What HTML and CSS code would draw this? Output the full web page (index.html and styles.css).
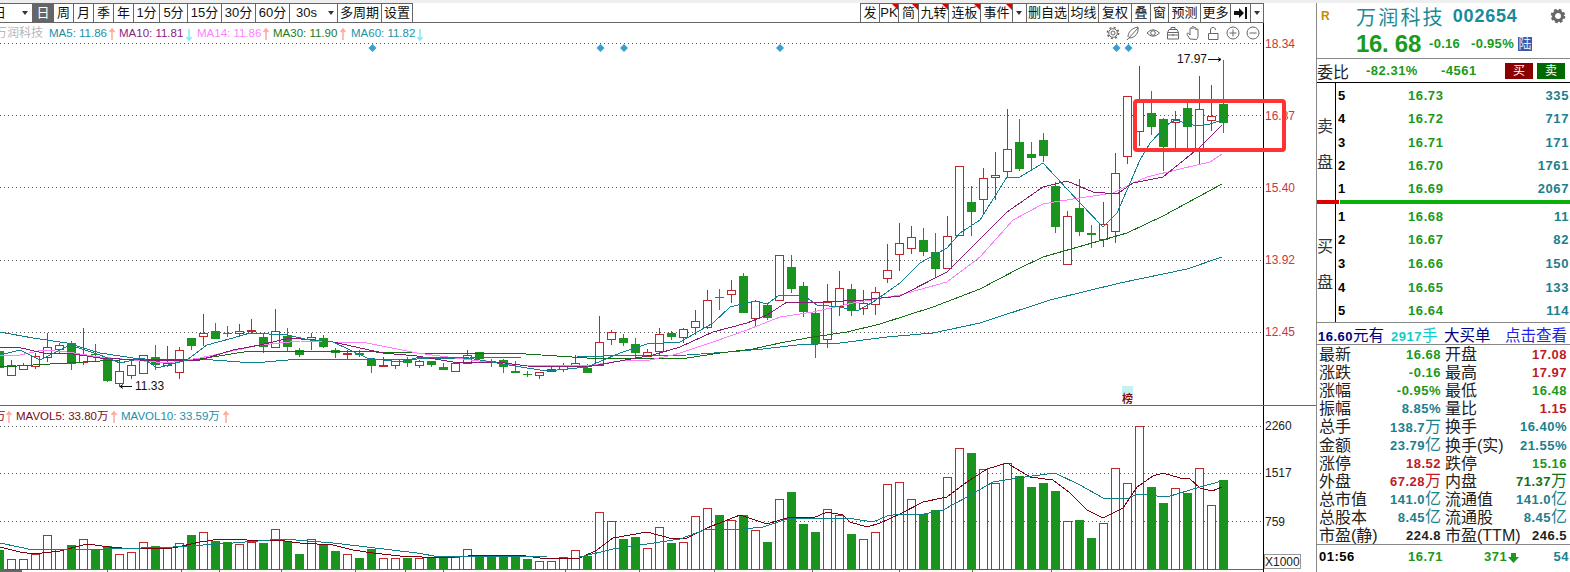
FILE: index.html
```html
<!DOCTYPE html>
<html lang="zh">
<head>
<meta charset="utf-8">
<title>万润科技 002654</title>
<link rel="stylesheet" href="styles.css">
</head>
<body>
<div class="strip"></div>
<div class="app">
  <main class="main">
    <nav class="toolbar">
      <div class="tgroup">
        <div class="cell first"><span class="firsttext">日</span><i class="caret"></i></div>
        <div class="cell c21 on">日</div>
        <div class="cell c20">周</div>
        <div class="cell c20">月</div>
        <div class="cell c20">季</div>
        <div class="cell c20">年</div>
        <div class="cell c26">1分</div>
        <div class="cell c28">5分</div>
        <div class="cell c34">15分</div>
        <div class="cell c34">30分</div>
        <div class="cell c34">60分</div>
        <div class="cell c48 sel"><span class="seltext">30s</span><i class="caret"></i></div>
        <div class="cell c44">多周期</div>
        <div class="cell c32 endb">设置</div>
      </div>
      <div class="tgroup">
        <div class="cell c19">发</div>
        <div class="cell c19 flag">PK</div>
        <div class="cell c20 flag">简</div>
        <div class="cell c30 flag">九转</div>
        <div class="cell c32 flag">连板</div>
        <div class="cell c32 flag">事件</div>
        <div class="cell c14"><i class="caret"></i></div>
        <div class="cell c42">删自选</div>
        <div class="cell c30">均线</div>
        <div class="cell c33">复权</div>
        <div class="cell c19">叠</div>
        <div class="cell c18">窗</div>
        <div class="cell c32">预测</div>
        <div class="cell c30">更多</div>
        <div class="cell c20">
          <svg class="pin" viewBox="0 0 13 12"><path d="M0 4h5V1l5 5-5 5V8H0z"/><path d="M11 0h2v12h-2z"/></svg>
        </div>
        <div class="cell c14 endb"><i class="caret"></i></div>
      </div>
    </nav>
    <svg id="chart" class="chart" viewBox="0 23 1316 549">
      <g id="grid" class="grid">
        <path d="M0 43.5H1262M0 115.5H1262M0 187.5H1262M0 260.5H1262M0 332.5H1262M0 426.5H1262M0 473.5H1262M0 521.5H1262"/>
      </g>
      <g class="frame">
        <path d="M1263.5 23V572"/>
      </g>
      <g class="sep">
        <path d="M0 405.5H1316M0 569.5H1263"/>
        <path d="M107.5 570V572M181.5 570V572M219.5 570V572M281.5 570V572M355.5 570V572M405.5 570V572M443.5 570V572M565.5 570V572M639.5 570V572M714.5 570V572M812.5 570V572M899.5 570V572M972.5 570V572M1051.5 570V572"/>
      </g>
      <rect class="sepbar" x="0" y="570" width="22" height="2"/>

      <g id="candles"></g>
      <g id="volumes"></g>
      <g id="lines"></g>

      <text class="t dim" x="-5" y="37">万润科技</text>
      <text class="t leg cma5" x="49" y="37">MA5: 11.86</text>
      <text class="t leg cma10" x="119" y="37">MA10: 11.81</text>
      <text class="t leg cma14" x="197" y="37">MA14: 11.86</text>
      <text class="t leg cma30" x="273" y="37">MA30: 11.90</text>
      <text class="t leg cma60" x="351" y="37">MA60: 11.82</text>
      <path class="aup" d="M112 29V40M109.500 32L112 29L114.500 32M266 29V40M263.500 32L266 29L268.500 32M343 29V40M340.500 32L343 29L345.500 32"/>
      <path class="adn" d="M189 29V40M186.500 37L189 40L191.500 37M420 29V40M417.500 37L420 40L422.500 37"/>

      <text class="t leg cvol5" x="-6" y="420">万</text>
      <text class="t leg cvol5" x="16" y="420">MAVOL5: 33.80万</text>
      <text class="t leg cvol10" x="121" y="420">MAVOL10: 33.59万</text>
      <path class="aup" d="M9 412V423M6.500 415L9 412L11.500 415M114 412V423M111.500 415L114 412L116.500 415M226 412V423M223.500 415L226 412L228.500 415"/>

      <g class="tools">
        <circle cx="1113" cy="33" r="2"/><circle cx="1113" cy="33" r="4.3"/>
        <circle class="teeth" cx="1113" cy="33" r="5.6" stroke-dasharray="2 2.4"/>
        <path d="M1127 40l11-12M1128 37c0-5 4-9 10-10 1 6-3 11-9 11"/>
        <path d="M1147 33q6-6.5 12.500 0q-6.500 6.500-12.500 0z"/><circle cx="1153" cy="33" r="2.300"/>
        <path d="M1167.500 32.500h11v6.500h-11zM1167.500 32.500l1.500-3h8l1.500 3M1171 29v-1.500h4v1.500M1167.500 35h11M1173 34v2"/>
        <path d="M1190 39c-2-3-3-4-3-5.500 1-1 2 0 3 1.500v-6c0-1.500 2-1.500 2 0v-1.500c0-1.500 2-1.500 2 0v1c0-1.500 2-1.500 2 0v1.500c0-1.500 2-1.500 2 0v5.500c0 2-.5 3-1.500 4z"/>
        <path d="M1208.500 33.500h9.500v6h-9.500zM1210.500 33.500v-3.500c0-3.500 5-3.500 5 0"/>
        <circle cx="1233" cy="33" r="6"/><path d="M1229.500 33h7M1233 29.500v7"/>
        <circle cx="1253" cy="33" r="6"/><path d="M1249.500 33h7"/>
      </g>
      <g class="diamonds">
        <path d="M372.500 44l4 4-4 4-4-4zM600.500 44l4 4-4 4-4-4zM624 44l4 4-4 4-4-4zM780 44l4 4-4 4-4-4zM1116.500 44l4 4-4 4-4-4zM1128.500 44l4 4-4 4-4-4z"/>
      </g>

      <text class="t ink" x="1177" y="63">17.97</text>
      <path class="mark" d="M1208 59.500h13M1218 57.500l3 2-3 2"/>
      <text class="t ink" x="135" y="390">11.33</text>
      <path class="mark" d="M120 386.500h12M123 384.500l-3 2 3 2"/>

      <rect class="rankbg" x="1122" y="386" width="11" height="9"/>
      <text class="t crank small" x="1122" y="403">榜</text>

      <text class="t axis" x="1265" y="48">18.34</text>
      <text class="t axis" x="1265" y="120">16.87</text>
      <text class="t axis" x="1265" y="192">15.40</text>
      <text class="t axis" x="1265" y="264">13.92</text>
      <text class="t axis" x="1265" y="336">12.45</text>
      <text class="t axisv" x="1265" y="430">2260</text>
      <text class="t axisv" x="1265" y="477">1517</text>
      <text class="t axisv" x="1265" y="526">759</text>
      <rect class="xbox" x="1264.500" y="554.500" width="36" height="14"/>
      <text class="t axisv" x="1265" y="566">X1000</text>

      <rect class="hilite" x="1135" y="101" width="149" height="49" rx="2"/>
    </svg>
  </main>

  <aside class="side">
    <header class="head">
      <div class="title">
        <span class="rmark">R</span>
        <span class="name">万润科技</span>
        <span class="code">002654</span>
        <svg class="gear" viewBox="0 0 16 16"><circle cx="8" cy="8" r="4.500"/><circle class="gearteeth" cx="8" cy="8" r="6.300" stroke-dasharray="2.800 2.150"/></svg>
      </div>
      <div class="price">
        <span class="now">16. 68</span>
        <span class="delta">-0.16</span>
        <span class="delta pct">-0.95%</span>
        <span class="lu">陆</span>
      </div>
    </header>

    <div class="wei">
      <span class="lbl">委比</span>
      <span class="w1">-82.31%</span>
      <span class="w2">-4561</span>
      <span class="btn buy">买</span>
      <span class="btn sell">卖</span>
    </div>

    <section class="book ask">
      <div class="booklbl"><span>卖</span><span>盘</span></div>
      <div class="rows">
        <div class="row"><b>5</b><em>16.73</em><u>335</u></div>
        <div class="row"><b>4</b><em>16.72</em><u>717</u></div>
        <div class="row"><b>3</b><em>16.71</em><u>171</u></div>
        <div class="row"><b>2</b><em>16.70</em><u>1761</u></div>
        <div class="row"><b>1</b><em>16.69</em><u>2067</u></div>
      </div>
    </section>
    <div class="meter"><i class="mred"></i><i class="mgreen"></i></div>
    <section class="book bid">
      <div class="booklbl"><span>买</span><span>盘</span></div>
      <div class="rows">
        <div class="row"><b>1</b><em>16.68</em><u>11</u></div>
        <div class="row"><b>2</b><em>16.67</em><u>82</u></div>
        <div class="row"><b>3</b><em>16.66</em><u>150</u></div>
        <div class="row"><b>4</b><em>16.65</em><u>133</u></div>
        <div class="row"><b>5</b><em>16.64</em><u>114</u></div>
      </div>
    </section>

    <div class="big">
      <span class="navy"><b>16.60</b>元有</span>
      <span class="cyan"><b>2917</b>手</span>
      <span class="navy2">大买单</span>
      <span class="blue">点击查看</span>
    </div>

    <section class="stats">
      <div class="pair"><span>最新</span><b class="g">16.68</b></div><div class="pair"><span>开盘</span><b class="r">17.08</b></div>
      <div class="pair"><span>涨跌</span><b class="g">-0.16</b></div><div class="pair"><span>最高</span><b class="r">17.97</b></div>
      <div class="pair"><span>涨幅</span><b class="g">-0.95%</b></div><div class="pair"><span>最低</span><b class="g">16.48</b></div>
      <div class="pair"><span>振幅</span><b class="t2">8.85%</b></div><div class="pair"><span>量比</span><b class="r">1.15</b></div>
      <div class="pair"><span>总手</span><b class="t2">138.7<i>万</i></b></div><div class="pair"><span>换手</span><b class="t2">16.40%</b></div>
      <div class="pair"><span>金额</span><b class="t2">23.79<i>亿</i></b></div><div class="pair"><span>换手(实)</span><b class="t2">21.55%</b></div>
      <div class="pair"><span>涨停</span><b class="r">18.52</b></div><div class="pair"><span>跌停</span><b class="g">15.16</b></div>
      <div class="pair"><span>外盘</span><b class="r">67.28<i>万</i></b></div><div class="pair"><span>内盘</span><b class="dg">71.37<i>万</i></b></div>
      <div class="pair"><span>总市值</span><b class="t2">141.0<i>亿</i></b></div><div class="pair"><span>流通值</span><b class="t2">141.0<i>亿</i></b></div>
      <div class="pair"><span>总股本</span><b class="t2">8.45<i>亿</i></b></div><div class="pair"><span>流通股</span><b class="t2">8.45<i>亿</i></b></div>
      <div class="pair"><span>市盈(静)</span><b>224.8</b></div><div class="pair"><span>市盈(TTM)</span><b>246.5</b></div>
    </section>

    <div class="tick">
      <b class="tm">01:56</b>
      <b class="g tp">16.71</b>
      <b class="g tv">371</b>
      <svg class="dn" viewBox="0 0 11 10"><path d="M3 0h5v4h3L5.500 10 0 4h3z"/></svg>
      <b class="t2 tn">54</b>
    </div>
  </aside>
</div>
<script src="chart.js"></script>
</body>
</html>
```
FILE: styles.css
```css
* { box-sizing: border-box; }
html, body { margin: 0; padding: 0; height: 100%; overflow: hidden; background: #fff; }
body {
  width: 1570px;
  height: 572px;
  font-family: "Liberation Sans", "Noto Sans CJK SC", sans-serif;
  color: #000;
}
.strip { height: 3px; background: #eeeeee; }
.app { display: flex; height: 569px; }

/* toolbar */
.main { width: 1316px; flex: none; display: flex; flex-direction: column; }
.toolbar {
  width: 1264px;
  height: 20px;
  flex: none;
  display: flex;
  justify-content: space-between;
  border-bottom: 1px solid #666;
  font-size: 13px;
  line-height: 18px;
}
.tgroup { display: flex; }
.cell {
  flex: none;
  height: 19px;
  border-top: 1px solid #666;
  border-left: 1px solid #666;
  text-align: center;
  white-space: nowrap;
  color: #111;
  position: relative;
}
.endb { border-right: 1px solid #666; }
.first { width: 42px; margin-left: -10px; border-left: 0; text-align: left; }
.firsttext { margin-left: 3px; }
.first .caret { left: 32px; }
.on { background: #666; color: #fff; }
.sel { text-align: left; }
.seltext { margin-left: 6px; }
.sel .caret { left: 38px; }
.c14 { width: 14px; } .c18 { width: 18px; } .c19 { width: 19px; } .c20 { width: 20px; } .c21 { width: 21px; }
.c26 { width: 26px; } .c28 { width: 28px; } .c30 { width: 30px; } .c32 { width: 32px; } .c33 { width: 33px; }
.c34 { width: 34px; } .c42 { width: 42px; } .c44 { width: 44px; } .c48 { width: 48px; }
.caret {
  position: absolute;
  left: 3px;
  top: 7px;
  width: 0;
  height: 0;
  border-left: 3.5px solid transparent;
  border-right: 3.5px solid transparent;
  border-top: 4px solid #333;
}
.flag::after {
  content: "";
  position: absolute;
  top: 0;
  right: 0;
  width: 0;
  height: 0;
  border-top: 6px solid #e00000;
  border-left: 6px solid transparent;
}
.pin { width: 13px; height: 12px; margin-top: 3px; fill: #111; }

/* chart */
.chart { display: block; width: 1316px; height: 549px; flex: none; }
.grid path { fill: none; stroke: #555; stroke-width: 1; stroke-dasharray: 1 3; shape-rendering: crispEdges; }
.frame path { fill: none; stroke: #000; stroke-width: 1; shape-rendering: crispEdges; }
.sep path { fill: none; stroke: #666; stroke-width: 1; shape-rendering: crispEdges; }
.sepbar { fill: #666; }
.wick-r { fill: none; stroke: #c0272d; stroke-width: 1; shape-rendering: crispEdges; }
.wick-g { fill: none; stroke: #1a941e; stroke-width: 1; shape-rendering: crispEdges; }
.body-g { fill: #1a941e; shape-rendering: crispEdges; }
.body-r { fill: #fff; stroke: #c0272d; stroke-width: 1; shape-rendering: crispEdges; }
.ln { fill: none; stroke-width: 1; shape-rendering: crispEdges; stroke-linejoin: round; }
.ma5 { stroke: #118090; }
.ma10 { stroke: #8a1a72; }
.ma14 { stroke: #ff80ff; }
.ma30 { stroke: #157015; }
.ma60 { stroke: #108088; }
.vol5 { stroke: #800010; }
.vol10 { stroke: #108088; }
.t { font: 12px "Liberation Sans", "Noto Sans CJK SC", sans-serif; }
.leg { font-size: 11.500px; }
.small { font-size: 11px; }
.dim { fill: #b8b8b8; }
.cma5 { fill: #1a8fa8; }
.cma10 { fill: #8e1a86; }
.cma14 { fill: #ff80ff; }
.cma30 { fill: #1a7a1a; }
.cma60 { fill: #1a93a8; }
.cvol5 { fill: #7a0a18; }
.cvol10 { fill: #1a8fa8; }
.aup { fill: none; stroke: #ffa898; stroke-width: 1.500; }
.adn { fill: none; stroke: #80eaf6; stroke-width: 1.500; }
.ink { fill: #111; }
.rankbg { fill: #c4f2f2; }
.crank { fill: #801010; font-weight: bold; }
.axis { fill: #c8383c; }
.axisv { fill: #222; }
.xbox { fill: #fff; stroke: #999; stroke-width: 1; }
.tools path, .tools circle { fill: none; stroke: #666; stroke-width: 1; }
.tools .teeth { stroke-width: 1.5; }
.diamonds path { fill: #3a9fd0; }
.mark { fill: none; stroke: #111; stroke-width: 1; }
.hilite { fill: none; stroke: #ff3333; stroke-width: 4; }

/* side panel */
.side {
  width: 254px;
  flex: none;
  border-left: 1px solid #888;
  display: flex;
  flex-direction: column;
}
.head { height: 56px; flex: none; border-bottom: 1px solid #888; }
.title { display: flex; align-items: center; height: 26px; position: relative; }
.rmark { width: 39px; padding-left: 4px; color: #c88a00; font-size: 12px; font-weight: bold; }
.name {
  font-size: 20px;
  letter-spacing: 2.2px;
  margin-right: 8px;
  color: #1a8a9a;
  white-space: nowrap;
}
.code {
  font-size: 18px;
  font-weight: bold;
  letter-spacing: .8px;
  color: #1a8a9a;
}
.gear { position: absolute; right: 4px; top: 5px; width: 16px; height: 16px; }
.gear circle { fill: none; stroke: #666; stroke-width: 3; }
.gear .gearteeth { stroke-width: 2; }
.price { display: flex; align-items: center; height: 29px; padding-left: 39px; }
.now { width: 73px; color: #1c9a1c; font-size: 24px; font-weight: bold; white-space: pre; letter-spacing: -.3px; }
.delta { color: #1a9a1a; font-size: 13px; font-weight: bold; letter-spacing: .3px; width: 42px; }
.pct { width: 47px; }
.lu {
  width: 14px;
  height: 14px;
  background: #3a5aa8;
  color: #dfe6ff;
  font-size: 13px;
  line-height: 14px;
  text-align: center;
}
.wei { height: 24px; flex: none; display: flex; align-items: center; border-bottom: 1px solid #000; font-weight: bold; color: #1a991a; font-size: 13px; letter-spacing: .5px; }
.wei .lbl { width: 49px; font-size: 16px; font-weight: normal; color: #222; letter-spacing: 0; white-space: nowrap; }
.w1 { width: 75px; }
.w2 { width: 64px; }
.btn { width: 28px; height: 16px; color: #fff; font-size: 12px; font-weight: normal; line-height: 16px; text-align: center; letter-spacing: 0; }
.buy { background: #8a0000; margin-right: 4px; }
.sell { background: #006a00; }

.book { display: flex; flex: none; }
.ask { height: 117px; }
.bid { height: 119px; border-bottom: 1px solid #888; }
.booklbl {
  width: 19px;
  flex: none;
  border-right: 1px solid #000;
  display: flex;
  flex-direction: column;
  justify-content: center;
  gap: 20px;
  font-size: 16px;
  line-height: 16px;
  color: #333;
}
.ask .booklbl { padding-top: 6px; }
.bid .booklbl { padding-top: 4px; }
.rows { flex: 1; display: flex; flex-direction: column; }
.row {
  flex: 1;
  display: flex;
  align-items: center;
  padding: 1px 1px 0 2px;
  font-size: 13px;
  font-weight: bold;
  letter-spacing: .6px;
}
.row b { width: 70px; color: #000; }
.row em { width: 60px; font-style: normal; color: #1a991a; }
.row u { flex: 1; text-decoration: none; text-align: right; color: #1a8090; }
.meter { display: flex; height: 4px; flex: none; gap: 1px; padding-bottom: 0; }
.mred { width: 22px; background: #dd0000; height: 4px; }
.mgreen { flex: 1; background: #0ab00a; height: 4px; }
.big {
  height: 22px;
  flex: none;
  display: flex;
  align-items: center;
  padding-left: 1px;
  border-bottom: 1px solid #888;
  font-size: 15.500px;
  white-space: nowrap;
}
.big b { font-size: 13px; letter-spacing: .5px; }
.navy { color: #000080; width: 73px; flex: none; }
.cyan { color: #11cccc; width: 53px; flex: none; }
.navy2 { color: #000080; width: 61px; flex: none; }
.blue { color: #2222ee; }
.stats {
  height: 200px;
  flex: none;
  display: grid;
  grid-template-columns: 122px 122px;
  grid-auto-rows: 18.100px;
  column-gap: 4px;
  padding: 1px 0 0 2px;
  border-bottom: 1px solid #888;
}
.pair {
  display: flex;
  justify-content: space-between;
  align-items: center;
  font-size: 16px;
  line-height: 18px;
  color: #222;
  white-space: nowrap;
}
.pair b { font-size: 13px; letter-spacing: .5px; }
.pair i { font-style: normal; font-weight: normal; font-size: 16px; letter-spacing: 0; }
.g { color: #1a991a; }
.r { color: #c01a28; }
.dg { color: #157015; }
.t2 { color: #1a8090; }
.tick {
  display: flex;
  align-items: center;
  height: 23px;
  flex: none;
  padding: 0 1px 0 2px;
  font-size: 13px;
  letter-spacing: .5px;
}
.tm { width: 89px; }
.tp { width: 76px; }
.tv { width: 24px; }
.dn { width: 11px; height: 10px; fill: #1a991a; margin-top: 2px; }
.tn { flex: 1; text-align: right; }
```
FILE: chart.js
```js
// candles: [high, bodyTop, bodyBottom, low, green?], index 0 sits at x = -1
const candles = [
[351,351,368,368,1],[360,365,375,376,0],[363,365,369,370,0],[353,356,366,369,0],[333,347,357,362,0],
[343,345,349,353,0],[341,343,364,370,1],[328,355,362,365,0],[344,354,355,361,1],[358,359,381,382,1],
[359,371,383,387,0],[360,365,375,379,0],[355,355,373,373,0],[345,357,365,370,1],[346,363,365,367,0],
[347,350,372,379,0],[338,338,346,350,1],[314,333,336,346,0],[323,331,339,339,1],[326,333,334,337,1],
[324,331,333,336,0],[319,330,331,333,0],[333,337,347,353,1],[309,331,347,347,0],[328,336,347,351,1],
[348,350,355,357,1],[333,337,339,350,0],[335,338,347,348,1],[348,350,353,358,1],[350,353,354,359,0],
[350,353,355,357,1],[359,359,366,373,1],[357,365,366,367,0],[359,359,365,369,0],[357,360,363,367,1],
[360,361,365,368,0],[361,361,365,367,1],[363,367,370,370,1],[363,363,371,371,0],[350,355,363,363,0],
[352,352,359,359,1],[359,361,362,367,1],[359,360,367,373,1],[361,371,373,373,1],[371,374,375,377,1],
[372,372,375,379,0],[366,369,371,371,0],[363,365,369,372,0],[355,363,365,365,0],[364,368,373,373,1],
[316,342,365,365,0],[330,332,339,345,0],[334,338,343,346,1],[338,344,353,358,1],[349,352,356,356,0],
[328,334,351,355,0],[331,333,337,340,1],[328,329,337,343,0],[310,321,327,335,0],[290,300,327,329,0],
[289,297,298,310,1],[280,290,294,303,0],[273,276,313,313,1],[300,301,318,326,0],[303,305,318,320,1],
[255,255,300,300,0],[255,267,289,293,1],[282,286,312,317,1],[308,313,344,358,1],[284,302,339,348,0],
[271,288,306,316,0],[284,289,311,316,1],[290,303,308,315,0],[287,292,304,315,0],[244,270,278,283,0],
[223,243,254,271,0],[226,237,248,254,0],[228,240,252,256,1],[233,252,269,277,1],[216,236,268,268,0],
[166,166,235,235,0],[186,202,212,236,1],[168,178,199,213,0],[152,175,177,200,0],[109,149,171,178,0],
[119,142,169,171,1],[142,154,158,169,1],[133,140,156,162,1],[182,186,227,233,1],[211,216,264,264,0],
[179,208,232,236,1],[225,233,235,248,1],[202,224,239,247,0],[153,173,231,243,0],[96,96,156,164,0],
[66,100,131,146,0],[91,113,127,135,1],[118,119,147,171,1],[111,119,122,149,0],[103,108,127,149,1],
[76,109,150,164,0],[85,116,120,131,0],[60,104,123,133,1]
];

// volume bar tops, same order as the candles
const volumes = [
550,559,559,554,535,549,545,539,549,546,554,552,542,546,548,543,535,532,541,542,
544,542,543,529,541,554,539,545,551,554,558,549,558,558,558,558,558,557,557,549,
556,556,556,556,559,561,561,557,550,556,512,521,539,537,548,527,543,542,516,508,
515,520,515,530,542,499,492,524,532,509,515,534,539,532,484,482,499,514,510,477,
448,453,469,483,463,476,487,483,491,521,520,538,523,468,483,426,487,503,488,493,
468,505,480
];

const lines = {
  ma60: [[0,332],[33,338],[67,343],[100,353],[140,359],[200,359],[253,363],[300,359],[417,359],[470,358],[522,357],[577,357],[603,356],[687,355],[728,352],[763,349],[797,345],[840,343],[887,337],[933,333],[980,323],[1050,300],[1120,283],[1187,269],[1222,257]],
  ma30: [[0,367],[67,363],[100,361],[140,359],[200,359],[250,351],[333,351],[417,353],[510,353],[557,356],[587,358],[687,358],[720,353],[753,349],[780,343],[813,337],[847,332],[880,324],[933,307],[980,289],[1018,269],[1043,257],[1127,233],[1163,216],[1222,184]],
  ma14: [[0,355],[20,355],[43,350],[67,352],[100,357],[133,360],[167,363],[200,358],[260,345],[300,341],[333,342],[367,343],[417,353],[463,359],[487,362],[520,365],[587,366],[620,361],[650,360],[673,355],[680,353],[713,342],[747,330],[780,317],[813,312],[853,303],[900,295],[947,282],[980,257],[1013,220],[1043,204],[1060,201],[1113,193],[1133,183],[1147,177],[1180,169],[1210,162],[1222,154]],
  ma10: [[0,347],[17,347],[43,353],[73,354],[100,358],[140,360],[200,360],[233,350],[260,345],[290,338],[333,342],[383,353],[417,356],[453,362],[497,362],[527,366],[587,367],[620,361],[653,355],[680,347],[713,332],[747,323],[767,315],[787,302],[823,302],[863,300],[900,296],[947,272],[977,242],[1007,212],[1043,187],[1067,181],[1093,192],[1117,194],[1133,183],[1163,177],[1200,147],[1222,125]],
  ma5: [[0,355],[20,350],[40,360],[70,345],[100,355],[120,363],[143,358],[157,368],[187,360],[207,345],[233,338],[250,333],[287,335],[310,340],[333,342],[367,358],[400,362],[420,357],[463,357],[497,363],[527,368],[547,371],[587,367],[620,353],[647,344],[680,342],[713,323],[730,307],[755,301],[767,304],[778,296],[803,295],[817,305],[840,307],[857,311],[873,302],[900,283],[920,263],[947,248],[960,233],[980,220],[1007,177],[1020,177],[1043,163],[1080,203],[1103,227],[1117,213],[1140,160],[1150,143],[1167,125],[1175,120],[1197,126],[1210,124],[1222,120]],
  vol5: [[0,547],[20,552],[33,554],[60,551],[87,544],[110,547],[133,549],[173,548],[200,542],[220,539],[247,540],[277,540],[300,543],[333,545],[353,550],[373,553],[400,556],[443,558],[480,555],[519,555],[547,559],[580,558],[597,550],[613,538],[647,532],[673,539],[687,538],[707,528],[740,515],[767,524],[790,517],[813,518],[827,512],[843,515],[850,522],[867,527],[880,523],[900,514],[923,502],[947,497],[967,482],[987,469],[1007,463],[1030,477],[1053,480],[1070,493],[1087,510],[1103,518],[1123,508],[1137,487],[1153,476],[1163,473],[1180,478],[1190,479],[1200,488],[1212,491],[1222,487]],
  vol10: [[0,543],[33,550],[73,549],[110,549],[173,547],[233,543],[283,539],[333,543],[367,547],[417,553],[440,557],[480,556],[547,557],[580,557],[613,549],[647,544],[680,539],[707,529],[733,530],[763,527],[790,518],[847,518],[873,522],[887,516],[900,514],[920,515],[943,510],[967,497],[993,482],[1017,478],[1055,473],[1080,485],[1103,498],[1127,499],[1137,494],[1167,497],[1200,487],[1222,481]]
};

const svg = id => document.getElementById(id);
const xAt = i => -1 + 12 * i;

let wickR = "", wickG = "", bodyG = "", bodyR = "";
candles.forEach(([hi, top, bot, lo, green], i) => {
  const x = xAt(i);
  const w = x + 0.5;
  if (green) {
    wickG += `M${w} ${hi}V${lo}`;
    bodyG += `M${x - 4} ${top}h9v${Math.max(bot - top, 1)}h-9z`;
  } else {
    if (hi < top) wickR += `M${w} ${hi}V${top}`;
    if (lo > bot) wickR += `M${w} ${bot}V${lo}`;
    bodyR += `M${x - 3.5} ${top + 0.5}h8v${Math.max(bot - top, 1)}h-8z`;
  }
});
svg("candles").innerHTML =
  `<path class="wick-r" d="${wickR}"/><path class="wick-g" d="${wickG}"/>` +
  `<path class="body-g" d="${bodyG}"/><path class="body-r" d="${bodyR}"/>`;

let volG = "", volR = "";
volumes.forEach((top, i) => {
  const x = xAt(i);
  if (candles[i][4]) volG += `M${x - 4} ${top}h9V569h-9z`;
  else volR += `M${x - 3.5} ${top + 0.5}h8V569h-8z`;
});
svg("volumes").innerHTML = `<path class="body-g" d="${volG}"/><path class="body-r" d="${volR}"/>`;

svg("lines").innerHTML = Object.entries(lines)
  .map(([name, pts]) => `<polyline class="ln ${name}" points="${pts.map(p => p.join(",")).join(" ")}"/>`)
  .join("");
```
